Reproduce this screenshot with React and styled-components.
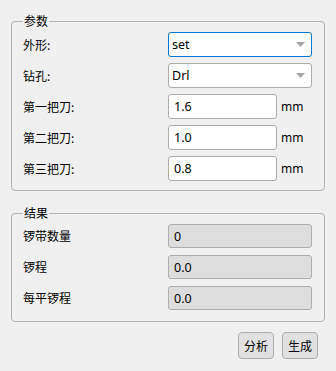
import React from 'react';
import styled, { createGlobalStyle } from 'styled-components';

const GlobalStyle = createGlobalStyle`
  html, body {
    margin: 0;
    padding: 0;
    background: #f0f0f0;
  }
  body {
    font-family: "Noto Sans", "Noto Sans CJK SC", sans-serif;
    font-size: 12px;
    color: #000;
  }
`;

function Arrow() {
  return (
    <svg width="9" height="5" viewBox="0 0 9 5">
      <polygon points="0,0 9,0 4.5,5" fill="#a6a6a6" />
    </svg>
  );
}

function App() {
  return (
    <Page>
      <GlobalStyle />
      <Group>
        <Legend>参数</Legend>
        <Rows>
          <Label>外形:</Label>
          <Combo focused>
            <span>set</span>
            <Arrow />
          </Combo>
          <Label>钻孔:</Label>
          <Combo>
            <span>Drl</span>
            <Arrow />
          </Combo>
          <Label>第一把刀:</Label>
          <Field>
            <Input>1.6</Input>
            <Unit>mm</Unit>
          </Field>
          <Label>第二把刀:</Label>
          <Field>
            <Input>1.0</Input>
            <Unit>mm</Unit>
          </Field>
          <Label>第三把刀:</Label>
          <Field>
            <Input>0.8</Input>
            <Unit>mm</Unit>
          </Field>
        </Rows>
      </Group>
      <Group result>
        <Legend>结果</Legend>
        <Rows result>
          <Label>锣带数量</Label>
          <ReadOnly>0</ReadOnly>
          <Label>锣程</Label>
          <ReadOnly>0.0</ReadOnly>
          <Label>每平锣程</Label>
          <ReadOnly>0.0</ReadOnly>
        </Rows>
      </Group>
      <Buttons>
        <Button>分析</Button>
        <Button>生成</Button>
      </Buttons>
    </Page>
  );
}

export default App;

const Page = styled.div`
  width: 336px;
  height: 371px;
  padding: 14px 0 0 11px;
  box-sizing: border-box;
`;

const Group = styled.fieldset`
  width: 314px;
  box-sizing: border-box;
  margin: ${p => (p.result ? '15px' : '0')} 0 0 0;
  padding: 4px 0 ${p => (p.result ? '11px' : '9px')} 11px;
  border: 1px solid #b2b2b2;
  border-radius: 4px;
  min-width: 0;
`;

const Legend = styled.legend`
  padding: 0 1px;
  margin-left: 0;
  line-height: 14px;
  font-family: "Noto Sans CJK SC", sans-serif;
  font-size: 12px;
`;

const Rows = styled.div`
  display: grid;
  grid-template-columns: 145px 144px;
  grid-auto-rows: ${p => (p.result ? '24px' : '25px')};
  row-gap: ${p => (p.result ? '7px' : '6px')};
  align-items: center;
`;

const Label = styled.div`
  font-family: "Noto Sans CJK SC", sans-serif;
  font-size: 12px;
  line-height: 14px;
`;

const Combo = styled.div`
  height: 100%;
  box-sizing: border-box;
  display: flex;
  align-items: center;
  justify-content: space-between;
  padding: 0 6px 0 3px;
  background: #fff;
  border: 1px solid ${p => (p.focused ? '#0078d7' : '#adadad')};
  border-radius: 3px;
  font-size: 12.5px;
`;

const Field = styled.div`
  height: 100%;
  display: flex;
  align-items: center;
  gap: 4px;
`;

const Input = styled.div`
  width: 109px;
  height: 100%;
  box-sizing: border-box;
  display: flex;
  align-items: center;
  padding-left: 5px;
  background: #fff;
  border: 1px solid #adadad;
  border-radius: 3px;
  font-size: 12.5px;
`;

const Unit = styled.span`
  font-size: 12px;
  white-space: nowrap;
`;

const ReadOnly = styled.div`
  height: 100%;
  box-sizing: border-box;
  display: flex;
  align-items: center;
  padding-left: 5px;
  background: #dddddd;
  border: 1px solid #adadad;
  border-radius: 3px;
  font-size: 12.5px;
`;

const Buttons = styled.div`
  display: flex;
  gap: 8px;
  margin-top: 10px;
  padding-left: 227px;
`;

const Button = styled.button`
  width: 36px;
  height: 27px;
  padding: 0;
  background: #e1e1e1;
  border: 1px solid #adadad;
  border-radius: 4px;
  font-family: "Noto Sans CJK SC", sans-serif;
  font-size: 12px;
  color: #000;
`;
